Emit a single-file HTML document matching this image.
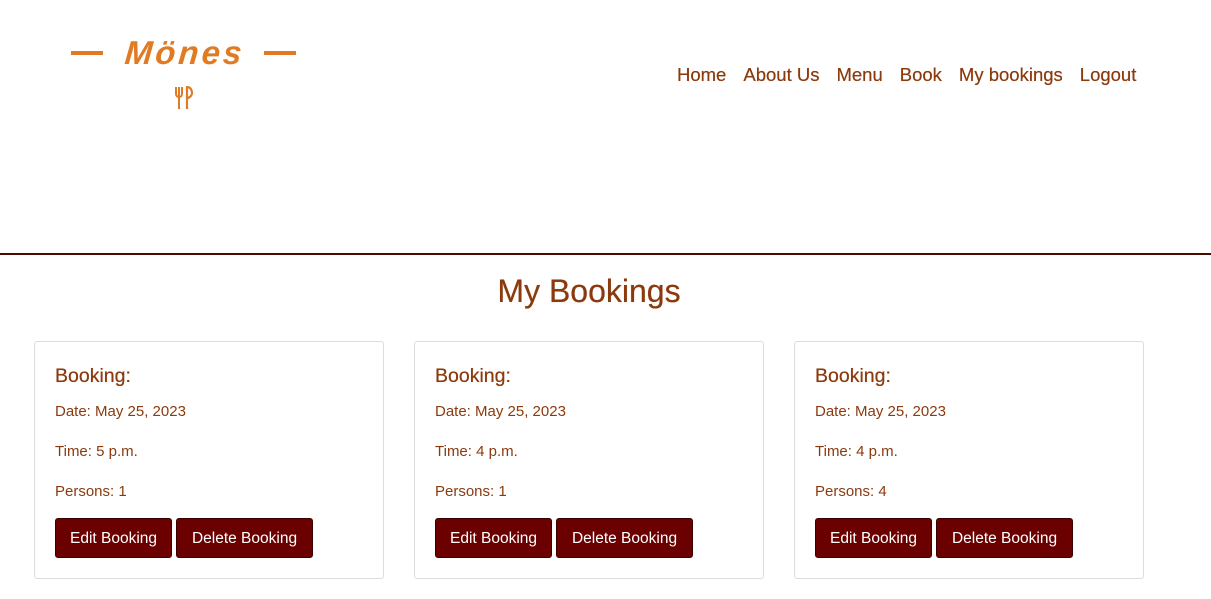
<!DOCTYPE html>
<html><head><style>
body{margin:0;width:1211px;height:599px;background:#fff;font-family:"Liberation Sans",sans-serif;position:relative;overflow:hidden}
.a{position:absolute}
.bar{background:#e07b24;height:4px;width:32px;top:51px}
.logo{left:125px;top:34px;font-family:"Liberation Sans",sans-serif;font-weight:bold;font-style:italic;font-size:33px;letter-spacing:3px;color:#e07b24;transform:skewX(-5deg)}
nav{left:677px;top:64px;font-size:18.5px;color:#8b3a0e;white-space:nowrap;text-shadow:0 0 0.4px #8b3a0e}
nav span{margin-right:17px}
.line{top:253px;left:0;width:1211px;height:2px;background:#4a0c00}
h1{position:absolute;margin:0;top:273px;left:0;width:1178px;text-align:center;font-size:32px;font-weight:normal;color:#8b3a0e;text-shadow:0 0 0.5px #8b3a0e}
.card{position:absolute;top:341px;width:348px;height:236px;border:1px solid #ddd;border-radius:3px}
.card h3{position:absolute;margin:0;left:20px;top:23px;font-size:19.5px;font-weight:normal;color:#8b3a0e;text-shadow:0 0 0.5px #8b3a0e}
.card p{position:absolute;margin:0;left:20px;font-size:15px;color:#8b3a0e}
.btn{position:absolute;top:176px;height:40px;line-height:40px;background:#6b0000;color:#fff;border-radius:3px;font-size:15.5px;text-align:center;border:1px solid #3a0000;box-sizing:border-box}
</style></head><body>
<div class="a bar" style="left:71px"></div>
<div class="a bar" style="left:264px"></div>
<div class="a logo">Mönes</div>
<svg class="a" style="left:174px;top:86px" width="20" height="24" viewBox="0 0 20 24"><path d="M2 1v7a3 3 0 0 0 6 0V1M5 1v22" stroke="#e07b24" stroke-width="2" fill="none"/><path d="M13 23V1c4 0 5 4 5 6s-2 5-5 5" stroke="#e07b24" stroke-width="2.2" fill="none"/></svg>
<nav class="a"><span>Home</span><span>About Us</span><span>Menu</span><span>Book</span><span>My bookings</span><span>Logout</span></nav>
<div class="a line"></div>
<h1>My Bookings</h1>
<div class="card" style="left:34px"><h3>Booking:</h3><p style="top:61px">Date: May 25, 2023</p><p style="top:101px">Time: 5 p.m.</p><p style="top:141px">Persons: 1</p><div class="btn" style="left:20px;width:117px">Edit Booking</div><div class="btn" style="left:141px;width:137px">Delete Booking</div></div>
<div class="card" style="left:414px"><h3>Booking:</h3><p style="top:61px">Date: May 25, 2023</p><p style="top:101px">Time: 4 p.m.</p><p style="top:141px">Persons: 1</p><div class="btn" style="left:20px;width:117px">Edit Booking</div><div class="btn" style="left:141px;width:137px">Delete Booking</div></div>
<div class="card" style="left:794px"><h3>Booking:</h3><p style="top:61px">Date: May 25, 2023</p><p style="top:101px">Time: 4 p.m.</p><p style="top:141px">Persons: 4</p><div class="btn" style="left:20px;width:117px">Edit Booking</div><div class="btn" style="left:141px;width:137px">Delete Booking</div></div>
</body></html>
